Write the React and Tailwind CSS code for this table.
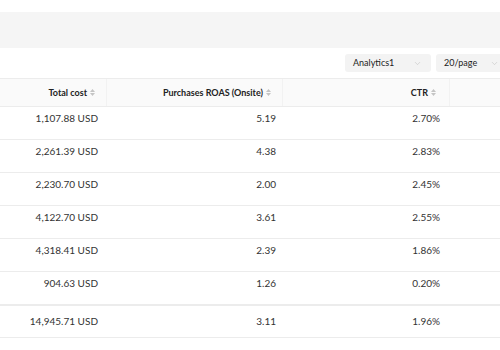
import { ChevronDown } from 'lucide-react'

const ROWS = [
  ['1,107.88 USD', '5.19', '2.70%'],
  ['2,261.39 USD', '4.38', '2.83%'],
  ['2,230.70 USD', '2.00', '2.45%'],
  ['4,122.70 USD', '3.61', '2.55%'],
  ['4,318.41 USD', '2.39', '1.86%'],
  ['904.63 USD', '1.26', '0.20%'],
]

const TOTAL = ['14,945.71 USD', '3.11', '1.96%']

function SortIcon() {
  return (
    <span className="ml-[3px] inline-flex flex-col gap-[1px] text-[#c4c4c4]">
      <svg width="5" height="3" viewBox="0 0 5 3"><path d="M2.5 0L5 3H0z" fill="currentColor" /></svg>
      <svg width="5" height="3" viewBox="0 0 5 3"><path d="M0 0h5L2.5 3z" fill="currentColor" /></svg>
    </span>
  )
}

function Select({ label, width }) {
  return (
    <div className={`flex h-[18px] items-center justify-between rounded-[3px] bg-[#f3f3f3] pl-[8px] pr-[9px] ${width}`}>
      <span className="text-[9px] text-[#222]">{label}</span>
      <ChevronDown size={9} strokeWidth={1.5} className="text-[#c0c0c0]" />
    </div>
  )
}

export default function App() {
  return (
    <div className="h-[350px] w-[500px] overflow-hidden bg-white font-['Lato',sans-serif] text-[#333]">
      <div className="h-[12px]" />
      {/* filter band */}
      <div className="h-[36px] bg-[#f5f5f5]" />

      {/* toolbar */}
      <div className="flex h-[30px] items-center justify-end gap-[5px]">
        <Select label="Analytics1" width="w-[86px]" />
        <Select label="20/page" width="w-[72px] -mr-[8px]" />
      </div>

      {/* table header */}
      <div className="grid h-[29px] grid-cols-[107px_176px_167px_50px] items-center border-y border-[#ececec] bg-[#fafafa] text-[9px] font-bold text-[#222]">
        <div className="flex h-full items-center justify-end border-r border-[#f2f2f2] pr-[11px]">
          Total cost<SortIcon />
        </div>
        <div className="flex h-full items-center justify-end border-r border-[#f2f2f2] pr-[11px]">
          Purchases ROAS (Onsite)<SortIcon />
        </div>
        <div className="flex h-full items-center justify-end border-r border-[#f2f2f2] pr-[13px]">
          CTR<SortIcon />
        </div>
        <div />
      </div>

      {/* rows */}
      {ROWS.map((r) => (
        <div
          key={r[0]}
          className="grid h-[33px] grid-cols-[107px_176px_167px_50px] border-b border-[#ececec] pt-[4px] text-[10px] text-[#333]"
        >
          <div className="pr-[9px] text-right">{r[0]}</div>
          <div className="pr-[7px] text-right">{r[1]}</div>
          <div className="pr-[10px] text-right">{r[2]}</div>
          <div />
        </div>
      ))}

      {/* total */}
      <div className="grid h-[33px] grid-cols-[107px_176px_167px_50px] items-center border-y border-[#ececec] text-[10px] text-[#333]">
        <div className="pr-[9px] text-right">{TOTAL[0]}</div>
        <div className="pr-[7px] text-right">{TOTAL[1]}</div>
        <div className="pr-[10px] text-right">{TOTAL[2]}</div>
        <div />
      </div>
    </div>
  )
}
